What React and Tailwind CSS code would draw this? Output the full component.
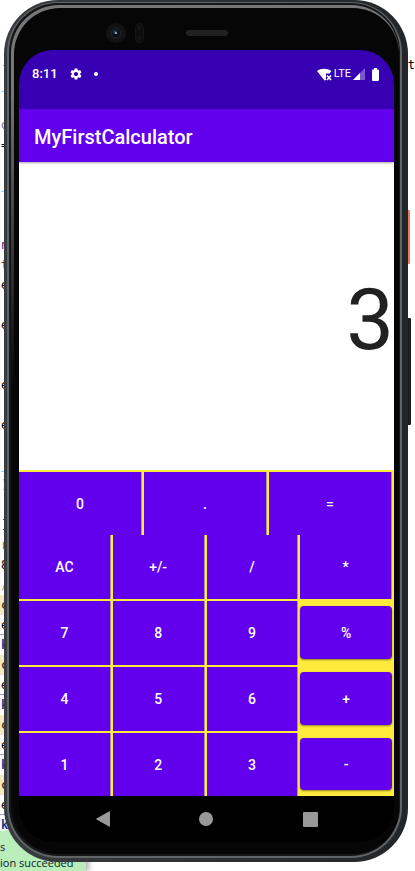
import React, { useState } from "react";
import { MdSettings } from "react-icons/md";

const editorRows = [
  "", "", "", "-", "_", "", "o", "=", "", "_", "", "", "n", "t", "e", "", "e", "", "", "e",
  "", "e", "", "_", ")", "", "]", "r", "8", "/", "c", "e", "k", "c", "e", "k", "c", "e", "k", "c", "e", "k",
];

const rowTone = {
  "-": "text-sky-400",
  _: "text-sky-400",
  o: "text-slate-500",
  t: "text-amber-900",
  n: "text-purple-900",
  ")": "text-stone-400",
  "]": "text-blue-900",
  r: "text-amber-700",
  "/": "text-stone-400",
  c: "bg-[#f3e8c2] text-black",
  k: "font-bold text-blue-900",
};

function Editor() {
  return (
    <div
      aria-hidden="true"
      className="relative col-start-1 row-start-1 h-full overflow-hidden bg-white font-['DejaVu_Sans_Mono',monospace] text-xs"
    >
      <div className="flex flex-col">
        {editorRows.map((glyph, i) => (
          <div
            key={i}
            className="flex h-5 shrink-0 items-stretch justify-between leading-5 first:h-[15px]"
          >
            <span
              className={`w-1/4 pl-px ${rowTone[glyph] || "text-black"} ${i > 26 && glyph === "e" ? "border-b border-gray-400" : ""}`}
            >
              {glyph}
            </span>
            {i === 3 && <span className="text-black">t</span>}
          </div>
        ))}
      </div>
      <div className="absolute bottom-0 left-0 w-[86px] bg-[#b9eebb] pt-2 font-['Open_Sans',sans-serif] text-[11px] leading-4 text-gray-900 shadow-[3px_0_5px_rgba(0,0,0,0.3)]">
        <p>s</p>
        <p>ion succeeded</p>
      </div>
    </div>
  );
}

function Bezel() {
  return (
    <div className="grid h-[42px] grid-cols-3 pt-[14px]">
      <div className="flex items-start justify-end gap-2">
        <svg width="22" height="22" viewBox="0 0 22 22" aria-hidden="true">
          <circle cx="11" cy="11" r="10" fill="#121213" />
          <circle cx="11" cy="11" r="6" fill="#1b1c20" />
          <circle cx="11" cy="11" r="4" fill="#0c0f16" />
          <circle cx="10" cy="10" r="2" fill="#2e3b52" />
          <circle cx="11" cy="11" r="1" fill="#a8b8cc" />
        </svg>
        <svg width="9" height="22" viewBox="0 0 9 22" aria-hidden="true">
          <rect x="0.5" y="1.5" width="8" height="19" rx="4" fill="#0c0c0d" stroke="#161617" />
          <circle cx="4.5" cy="6" r="2.5" fill="#131314" />
          <circle cx="4.5" cy="16" r="2.5" fill="#131314" />
        </svg>
      </div>
      <div className="flex justify-center pt-2">
        <div className="h-[6px] w-[42px] rounded-full bg-[#212122]" />
      </div>
    </div>
  );
}

function StatusBar() {
  return (
    <div className="flex h-[59px] items-start justify-between rounded-t-[34px] bg-[#3700b3] px-[13px] pt-4 text-white">
      <div className="flex h-4 items-center">
        <span className="w-[37px] text-[13px] leading-4 font-medium">8:11</span>
        <MdSettings className="size-[14px]" aria-label="Settings" />
        <span className="ml-[11px] size-1 rounded-full bg-white" />
      </div>
      <div className="flex h-4 items-center">
        <svg width="15" height="13" viewBox="0 0 15 13" aria-label="Wi-Fi, no internet">
          <path d="M0 3C4 0 10 0 14.5 3L12.5 5.5H9V12L7.5 12.5Z" fill="#fff" />
          <path d="M10 7.5L14 12M14 7.5L10 12" stroke="#fff" strokeWidth="1.6" />
        </svg>
        <span className="ml-[2px] text-[11px] leading-4">LTE</span>
        <svg className="ml-[2px]" width="12" height="12" viewBox="0 0 12 12" aria-label="Signal">
          <path d="M12 0V12H0Z" fill="#7c58ce" />
          <path d="M7 5V12H0Z" fill="#fff" />
        </svg>
        <svg className="mr-px ml-[6px]" width="9" height="13" viewBox="0 0 9 13" aria-label="Battery">
          <path d="M3 0h3v1.500h1q1 0 1 1V12q0 1-1 1h-5q-1 0-1-1V2.500q0-1 1-1h1Z" fill="#fff" />
        </svg>
      </div>
    </div>
  );
}

function Key({ label, onPress }) {
  return (
    <button
      type="button"
      onClick={() => onPress(label)}
      className="mr-[2px] border-r border-[#ab8f9b] bg-[#6200ee] text-sm font-medium text-white"
    >
      {label}
    </button>
  );
}

function RaisedKey({ label, onPress }) {
  return (
    <div className="flex pt-[7px] pr-[2px] pb-[6px]">
      <button
        type="button"
        onClick={() => onPress(label)}
        className="flex-1 rounded bg-[#6200ee] text-sm font-medium text-white shadow-[0_1px_2px_rgba(0,0,0,0.45)]"
      >
        {label}
      </button>
    </div>
  );
}

const numberRows = [
  ["7", "8", "9", "%"],
  ["4", "5", "6", "+"],
  ["1", "2", "3", "-"],
];

function Keypad({ onPress }) {
  return (
    <div className="bg-[#ffeb3b]">
      <div className="grid h-[65px] grid-cols-3 pt-[2px]">
        {["0", ".", "="].map((k) => (
          <Key key={k} label={k} onPress={onPress} />
        ))}
      </div>
      <div className="grid h-16 grid-cols-4">
        {["AC", "+/-", "/", "*"].map((k) => (
          <Key key={k} label={k} onPress={onPress} />
        ))}
      </div>
      {numberRows.map((row) => (
        <div key={row[0]} className="grid h-[66px] grid-cols-4 last:h-[65px]">
          {row.map((k, i) =>
            i === 3 ? (
              <RaisedKey key={k} label={k} onPress={onPress} />
            ) : (
              <div key={k} className="grid pt-[2px]">
                <Key label={k} onPress={onPress} />
              </div>
            )
          )}
        </div>
      ))}
    </div>
  );
}

function NavBar() {
  return (
    <nav className="grid h-[46px] grid-cols-3 rounded-b-[34px] bg-black px-8 text-[#999]">
      <button type="button" aria-label="Back" className="flex items-center justify-center">
        <svg width="14" height="16" viewBox="0 0 14 16">
          <path d="M13 .5Q14 0 14 1V15Q14 16 13 15.500L.5 8.500Q0 8 .5 7.500Z" fill="currentColor" />
        </svg>
      </button>
      <button type="button" aria-label="Home" className="flex items-center justify-center">
        <span className="size-[14px] rounded-full bg-current" />
      </button>
      <button type="button" aria-label="Recent apps" className="flex items-center justify-center">
        <span className="size-[15px] rounded-[1px] bg-current" />
      </button>
    </nav>
  );
}

function Phone({ children }) {
  return (
    <div className="relative col-start-1 row-start-1 mr-[7px] ml-1 self-start">
      <div className="absolute top-[210px] -right-[2px] h-[54px] w-1 rounded-r-[1px] bg-[#ee7860]" />
      <div className="absolute top-[318px] -right-[3px] h-[107px] w-1 rounded-r-[1px] bg-[#1d1f20]" />
      <div className="relative rounded-[54px] bg-linear-to-r from-[#3a3d40] to-[#232628] pt-[2px] pr-[6px] pb-1 pl-[3px]">
        <div className="rounded-[51px] bg-[#626568] pt-px pr-[2px] pb-[2px] pl-[2px]">
          <div className="rounded-[49px] bg-[#151617] pt-[2px] pr-px pb-[2px] pl-[2px]">
            <div className="rounded-[48px] bg-linear-to-b from-[#777] from-10% to-[#0a0809] to-45% pt-[3px] pl-[3px]">
              <div className="rounded-[46px] bg-[#070607] pr-[5px] pb-3 pl-[5px]">{children}</div>
            </div>
          </div>
        </div>
      </div>
    </div>
  );
}

export default function App() {
  const [value, setValue] = useState("3");
  const press = (key) => setValue(key === "AC" ? "0" : key);

  return (
    <main className="grid h-screen min-h-[863px] grid-cols-1 grid-rows-1 overflow-hidden bg-white font-[Roboto,sans-serif]">
      <Editor />
      <Phone>
        <Bezel />
        <StatusBar />
        <header className="relative flex h-[53px] items-center bg-[#6200ee] px-[15px] pt-[2px] shadow-[0_1px_2px_rgba(0,0,0,0.35)]">
          <h1 className="text-xl leading-6 font-medium text-white">MyFirstCalculator</h1>
        </header>
        <output className="flex h-[308px] items-center justify-end bg-white pt-2 text-[85px] leading-none text-[#212121]">
          {value}
        </output>
        <Keypad onPress={press} />
        <NavBar />
      </Phone>
    </main>
  );
}
